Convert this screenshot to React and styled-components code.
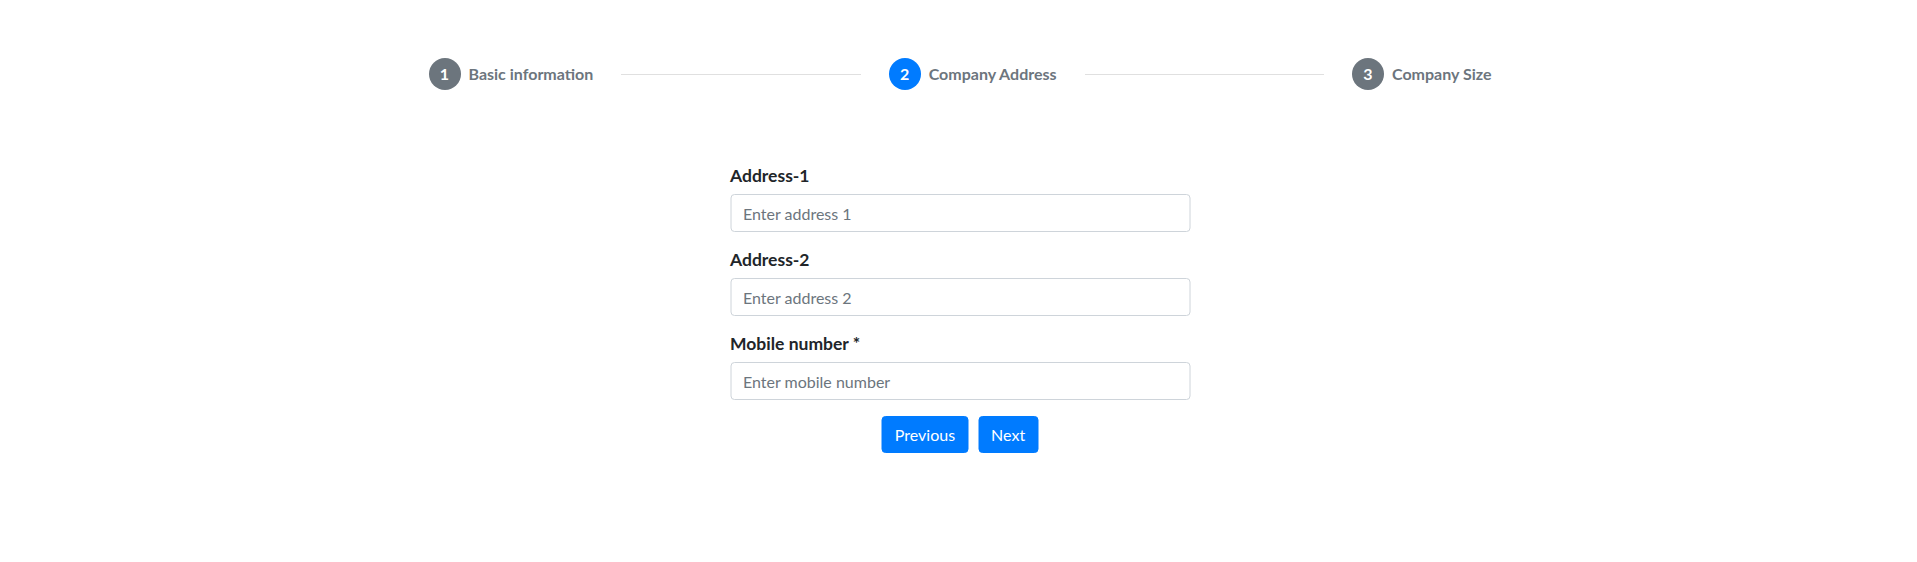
import React from "react";
import styled, { createGlobalStyle } from "styled-components";

const GlobalStyle = createGlobalStyle`
  html, body { margin: 0; padding: 0; background: #fff; }
  body {
    font-family: Lato, "Noto Sans", sans-serif;
    font-size: 16px;
    line-height: 1.5;
    color: #212529;
  }
  * { box-sizing: border-box; }
`;

const Page = styled.div`
  padding-top: 34px;
`;

const Container = styled.div`
  max-width: 1114px;
  margin: 0 auto;
  padding-left: 3px;
`;

const StepperHeader = styled.div`
  display: flex;
  align-items: center;
`;

const StepTrigger = styled.div`
  display: inline-flex;
  align-items: center;
  padding: 20px;
  font-size: 16px;
  font-weight: 700;
  line-height: 1.5;
  color: #6c757d;
  white-space: nowrap;
`;

const Circle = styled.span`
  display: inline-flex;
  align-items: center;
  justify-content: center;
  width: 32px;
  height: 32px;
  margin: 4px;
  border-radius: 16px;
  color: #fff;
  font-size: 16px;
  font-weight: 700;
  line-height: 1;
  background: ${(p) => (p.$active ? "#007bff" : "#6c757d")};
`;

const StepLabel = styled.span`
  margin: 4px;
`;

const Line = styled.div`
  flex: 1 0 32px;
  min-height: 1px;
  margin: 4px;
  background: rgba(0, 0, 0, 0.12);
`;

const FormWrap = styled.form`
  width: 460px;
  margin: 48px auto 0;
  padding: 0;
  transform: translateX(1.5px);
`;

const Group = styled.div`
  margin-bottom: 14px;
`;

const Label = styled.label`
  display: block;
  font-size: 17.5px;
  font-weight: 700;
  line-height: 27px;
  margin-bottom: 5px;
  color: #212529;
`;

const Input = styled.input`
  display: block;
  width: 100%;
  height: 38px;
  padding: 6px 12px;
  font-family: Lato, "Noto Sans", sans-serif;
  font-size: 16px;
  line-height: 1.5;
  color: #495057;
  background: #fff;
  border: 1px solid #ced4da;
  border-radius: 4px;
  outline: none;
  &::placeholder { color: #6c757d; opacity: 1; }
`;

const Actions = styled.div`
  display: flex;
  justify-content: center;
  gap: 10px;
  padding-top: 2px;
`;

const Button = styled.button`
  display: inline-block;
  height: 37px;
  padding: 0 12px;
  font-family: Lato, "Noto Sans", sans-serif;
  font-size: 16px;
  line-height: 1.5;
  color: #fff;
  background: #007bff;
  border: 1px solid #007bff;
  border-radius: 4px;
  cursor: pointer;
`;

const steps = [
  { n: 1, label: "Basic information" },
  { n: 2, label: "Company Address", active: true },
  { n: 3, label: "Company Size" },
];

const fields = [
  { label: "Address-1", placeholder: "Enter address 1" },
  { label: "Address-2", placeholder: "Enter address 2" },
  { label: "Mobile number *", placeholder: "Enter mobile number" },
];

export default function App() {
  return (
    <>
      <GlobalStyle />
      <Page>
        <Container>
          <StepperHeader>
            {steps.map((s, i) => (
              <React.Fragment key={s.n}>
                {i > 0 && <Line />}
                <StepTrigger>
                  <Circle $active={s.active}>{s.n}</Circle>
                  <StepLabel>{s.label}</StepLabel>
                </StepTrigger>
              </React.Fragment>
            ))}
          </StepperHeader>
        </Container>
        <FormWrap onSubmit={(e) => e.preventDefault()}>
          {fields.map((f) => (
            <Group key={f.label}>
              <Label>{f.label}</Label>
              <Input type="text" placeholder={f.placeholder} />
            </Group>
          ))}
          <Actions>
            <Button type="button">Previous</Button>
            <Button type="submit">Next</Button>
          </Actions>
        </FormWrap>
      </Page>
    </>
  );
}
